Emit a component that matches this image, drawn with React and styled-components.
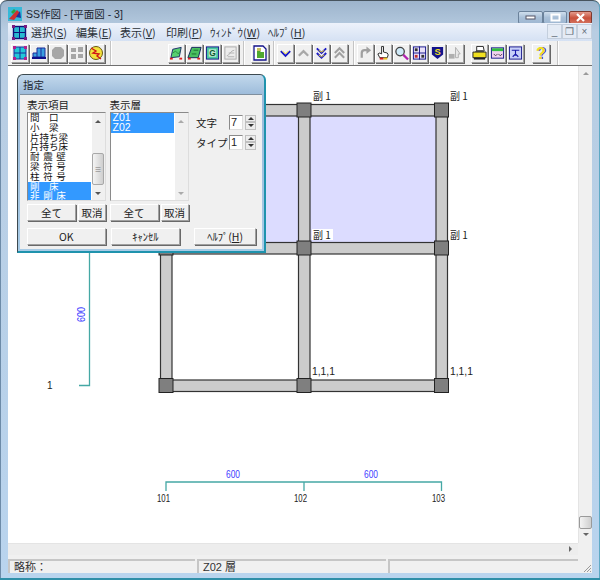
import React from "react";
import styled, { createGlobalStyle } from "styled-components";

const JP = `"Noto Sans CJK JP", "Liberation Sans", sans-serif`;

const GlobalStyle = createGlobalStyle`
  html, body { margin: 0; padding: 0; background: #fff; }
  body { font-family: ${JP}; color: #222; }
`;

/* window frame */
const Win = styled.div`
  width: 600px;
  height: 580px;
  box-sizing: border-box;
  display: flex;
  flex-direction: column;
  padding: 0 8px 7px 8px;
  border-radius: 7px 7px 0 0;
  border: 1px solid #47545e;
  border-width: 1px 0 0 0;
  box-shadow: inset 0 -2px 0 #2f8fa8, inset -1px 0 0 #5ea9c4, inset 1px 0 0 #6d8ba8;
  background: linear-gradient(180deg, #9db4cc 0, #b8cde2 30px, #b9d4ee 100%);
  overflow: hidden;
`;

const TitleBar = styled.div`
  height: 22px;
  display: flex;
  align-items: center;
  gap: 4px;
  font-size: 10.5px;
  color: #1c2630;
  padding-top: 3px;
  box-sizing: border-box;
`;

const TitleText = styled.span`
  font-family: "Liberation Sans", ${JP};
  flex: 1;
`;

const CapGroup = styled.div`
  display: flex;
  gap: 0;
  align-self: flex-start;
  margin-top: 7px;
`;

const CapBtn = styled.div`
  width: ${(p) => p.$w}px;
  height: 13px;
  margin-left: ${(p) => p.$ml || 0}px;
  border: 1px solid ${(p) => (p.$close ? "#7d3a30" : "#6b829b")};
  border-radius: 2px;
  box-sizing: border-box;
  display: flex;
  align-items: center;
  justify-content: center;
  background: ${(p) =>
    p.$close
      ? "linear-gradient(180deg,#e39b8d,#c9503c 55%,#d2705c)"
      : "linear-gradient(180deg,#cfdeed,#a9c0d8 50%,#9fb8d2)"};
`;

const MenuBar = styled.div`
  height: 18px;
  display: flex;
  align-items: center;
  background: linear-gradient(180deg, #edf2fb, #d5e1f3);
  font-size: 11px;
  color: #2a3138;
`;

const MenuIcon = styled.div`
  width: 23px;
  padding-left: 4px;
  box-sizing: border-box;
  display: flex;
`;

const MenuItem = styled.span`
  width: ${(p) => p.$w}px;
  white-space: nowrap;
  u { text-underline-offset: 1px; }
`;

const MdiButtons = styled.div`
  margin-left: auto;
  display: flex;
  height: 100%;
`;

const MdiBtn = styled.div`
  width: 15px;
  height: 15px;
  margin: 1px 0 0 0;
  box-sizing: border-box;
  border: 1px solid #c4cfdd;
  background: #e4ebf5;
  color: #66707c;
  font-size: 10px;
  line-height: 13px;
  text-align: center;
  font-family: "Liberation Sans", sans-serif;
`;

const Toolbar = styled.div`
  height: 25px;
  display: flex;
  align-items: center;
  background: #f0f0f0;
  border-bottom: 1px solid #6f6f6f;
  box-sizing: border-box;
`;

const Group = styled.div`
  display: flex;
  gap: 1px;
  margin-left: ${(p) => p.$ml}px;
`;

const Sep = styled.div`
  width: 1px;
  height: 24px;
  margin-left: ${(p) => p.$ml}px;
  background: #c4c4c4;
  border-right: 1px solid #fff;
`;

const ToolBtn = styled.div`
  width: ${(p) => p.$w}px;
  height: 19px;
  box-sizing: border-box;
  display: flex;
  align-items: center;
  justify-content: center;
  background: #f0f0f0;
  border-top: 1px solid #fff;
  border-left: 1px solid #fff;
  border-right: 1px solid #a0a0a0;
  border-bottom: 1px solid #a0a0a0;
  box-shadow: 1px 1px 0 #666;
  svg { display: block; }
`;

/* client area */
const Client = styled.div`
  position: relative;
  flex: 1;
  display: grid;
  grid-template-columns: 1fr 14px;
  grid-template-rows: 1fr 12px;
  background: #f0f0f0;
  min-height: 0;
`;

const Canvas = styled.div`
  background: #fff;
  overflow: hidden;
  svg { display: block; }
`;

const VScroll = styled.div`
  position: relative;
  background: #f0f0f0;
  border-left: 1px solid #e4e4e4;
`;

const VThumb = styled.div`
  position: absolute;
  left: 0;
  top: 450px;
  width: 13px;
  height: 13px;
  box-sizing: border-box;
  border: 1px solid #9a9a9a;
  border-radius: 2px;
  background: linear-gradient(90deg, #f4f4f4, #cfcfcf);
`;

const ArrowGlyph = styled.div`
  position: absolute;
  width: 0;
  height: 0;
  border-style: solid;
  border-color: transparent;
  ${(p) => p.$css}
`;

const HScroll = styled.div`
  position: relative;
  background: #ededed;
  border-top: 1px solid #e4e4e4;
  grid-column: 1;
`;

const Corner = styled.div`
  background: #f0f0f0;
`;

const StatusBar = styled.div`
  height: 18px;
  display: flex;
  gap: 2px;
  background: #f0f0f0;
  padding-top: 4px;
  box-sizing: border-box;
  font-size: 11px;
  position: relative;
`;

const StatusPanel = styled.div`
  width: ${(p) => p.$w}px;
  box-sizing: border-box;
  border-top: 2px solid #c6c6c6;
  border-left: 2px solid #c6c6c6;
  padding-left: 4px;
  line-height: 12px;
  color: #333;
  white-space: nowrap;
  font-family: "Liberation Sans", ${JP};
`;

const Grip = styled.svg`
  position: absolute;
  right: 0;
  bottom: 0;
`;

/* floating dialog */
const Dialog = styled.div`
  position: absolute;
  left: 9px;
  top: 8px;
  width: 249px;
  height: 179px;
  box-sizing: border-box;
  border: 1px solid #3d4a50;
  border-right: 2px solid #1f93ad;
  border-bottom: 2px solid #1f93ad;
  border-radius: 6px 6px 0 0;
  padding: 0 2px 2px 2px;
  background: linear-gradient(180deg, #c2d8ec, #9cbbda 20px, #a8cbe6);
  display: flex;
  flex-direction: column;
`;

const DialogTitle = styled.div`
  height: 19px;
  line-height: 19px;
  font-size: 10.5px;
  padding-left: 3px;
  color: #1c2630;
`;

const DialogBody = styled.div`
  flex: 1;
  background: #f0f0f0;
  border-top: 1px solid #7f8f9e;
  padding: 2px 6px 0 7px;
  display: flex;
  flex-direction: column;
  font-size: 10.5px;
`;

const TopRow = styled.div`
  display: flex;
`;

const Column = styled.div`
  width: ${(p) => p.$w}px;
  display: flex;
  flex-direction: column;
`;

const Label = styled.div`
  height: 15px;
  line-height: 15px;
  color: #222;
`;

const ListBox = styled.div`
  position: relative;
  width: 79px;
  height: 89px;
  box-sizing: border-box;
  border: 1px solid #8a8a8a;
  border-right-color: #ddd;
  border-bottom-color: #ddd;
  background: #fff;
  overflow: hidden;
`;

const ListItem = styled.div`
  height: 9.8px;
  line-height: 9.8px;
  width: 63px;
  padding-left: 2px;
  box-sizing: border-box;
  font-size: 9.5px;
  white-space: pre;
  word-spacing: 1.5px;
  background: ${(p) => (p.$sel ? "#3399ff" : "transparent")};
  color: ${(p) => (p.$sel ? "#fff" : "#111")};
`;

const LayerItem = styled(ListItem)`
  font-size: 10.5px;
  font-family: "Liberation Sans", sans-serif;
`;

const ListScroll = styled.div`
  position: absolute;
  right: 0;
  top: 0;
  bottom: 0;
  width: 13px;
  background: #f0f0f0;
`;

const ListThumb = styled.div`
  position: absolute;
  left: 0;
  top: 40px;
  width: 12px;
  height: 32px;
  box-sizing: border-box;
  border: 1px solid #a8a8a8;
  border-radius: 2px;
  background: linear-gradient(90deg, #f4f4f4, #cfcfcf);
  display: flex;
  align-items: center;
  justify-content: center;
  color: #777;
  font-size: 7px;
  line-height: 2px;
`;

const BtnRow = styled.div`
  display: flex;
  gap: ${(p) => p.$gap || 2}px;
  margin-top: ${(p) => p.$mt}px;
`;

const PushBtn = styled.div`
  width: ${(p) => p.$w}px;
  margin-left: ${(p) => p.$ml || 0}px;
  height: ${(p) => p.$h}px;
  line-height: ${(p) => p.$h - 2}px;
  box-sizing: border-box;
  text-align: center;
  font-size: 10.5px;
  color: #222;
  background: #f0f0f0;
  border-top: 1px solid #fff;
  border-left: 1px solid #fff;
  border-right: 1px solid #a0a0a0;
  border-bottom: 1px solid #a0a0a0;
  box-shadow: 1px 1px 0 #696969;
  white-space: nowrap;
`;

const SpinRow = styled.div`
  display: flex;
  align-items: center;
  height: 20px;
  font-size: 10.5px;
`;

const SpinLabel = styled.span`
  width: 33px;
`;

const SpinValue = styled.div`
  width: 14px;
  height: 15px;
  line-height: 13px;
  box-sizing: border-box;
  border: 1px solid #8a8a8a;
  border-right-color: #ddd;
  border-bottom-color: #ddd;
  background: #fff;
  font-size: 11px;
  padding-left: 1px;
  font-family: "Liberation Sans", sans-serif;
`;

const SpinBtns = styled.div`
  margin-left: 2px;
  width: 11px;
  height: 15px;
  display: flex;
  flex-direction: column;
`;

const SpinBtn = styled.div`
  flex: 1;
  position: relative;
  background: #ececec;
  border: 1px solid #c0c0c0;
  box-sizing: border-box;
`;

const up = (l, t, c = "#555") => `left:${l}px;top:${t}px;border-width:0 3px 3px 3px;border-bottom-color:${c};`;
const down = (l, t, c = "#555") => `left:${l}px;top:${t}px;border-width:3px 3px 0 3px;border-top-color:${c};`;

const S16 = ({ children }) => (
  <svg width="16" height="16" viewBox="0 0 16 16">
    {children}
  </svg>
);

const Dots = () => (
  <g fill="#e02020">
    <rect x="1" y="13" width="3" height="2" />
    <rect x="11" y="13" width="3" height="2" />
  </g>
);

const icons = {
  grid: (
    <S16>
      <rect x="2" y="2" width="12" height="12" fill="#22c8d8" stroke="#1a2a9a" />
      <path d="M8 2v12M2 8h12" stroke="#1a2a9a" />
      <g fill="#b02090">
        <rect x="1" y="1" width="3" height="3" />
        <rect x="12" y="1" width="3" height="3" />
        <rect x="1" y="12" width="3" height="3" />
        <rect x="12" y="12" width="3" height="3" />
      </g>
    </S16>
  ),
  stairs: (
    <S16>
      <path d="M2 12V8h4V3h8v9z" fill="#3aa0e0" stroke="#1a2a9a" />
      <path d="M6 8v4M10 3v9" stroke="#1a2a9a" />
      <rect x="1" y="12" width="14" height="2" fill="#10108a" />
    </S16>
  ),
  octagon: (
    <S16>
      <path d="M5 2h6l3 3v6l-3 3H5l-3-3V5z" fill="#a6a6a6" />
    </S16>
  ),
  squares: (
    <S16>
      <g fill="#a6a6a6">
        <rect x="2" y="3" width="5" height="4" />
        <rect x="9" y="2" width="5" height="5" />
        <rect x="2" y="9" width="5" height="5" />
        <rect x="9" y="9" width="5" height="4" />
      </g>
    </S16>
  ),
  yellow: (
    <S16>
      <circle cx="8" cy="8" r="6.5" fill="#f4e23c" stroke="#6a5a10" />
      <path d="M3 3l5 3-3 2 6 1-2 2 4 3" fill="none" stroke="#d01818" strokeWidth="1.4" />
    </S16>
  ),
  slabA: (
    <S16>
      <path d="M4 4l9-2-2 10-9 1z" fill="#58d070" stroke="#1a2a6a" />
      <path d="M4 8l3-2 3 3 2-3" fill="none" stroke="#2a8a40" />
      <Dots />
    </S16>
  ),
  slabB: (
    <S16>
      <path d="M5 2h10l-3 11H1z" fill="#48c060" stroke="#10205a" />
      <path d="M7 5h5M5 9h5" stroke="#1a6a30" />
      <Dots />
    </S16>
  ),
  boxG: (
    <S16>
      <rect x="1.5" y="1.5" width="13" height="13" fill="#48c8a0" stroke="#14148a" />
      <rect x="4" y="4" width="8" height="8" fill="#bfe8d0" />
      <text x="8" y="11.5" fontSize="9" fontFamily="Liberation Sans" fontWeight="700" textAnchor="middle" fill="#0a5a30">G</text>
    </S16>
  ),
  ghost: (
    <S16>
      <rect x="2" y="1.5" width="12" height="13" fill="#ececec" stroke="#a8a8a8" />
      <path d="M4 11c3 0 4-6 8-6M5 12h7M6 8h6" fill="none" stroke="#b0b0b0" />
    </S16>
  ),
  doc: (
    <S16>
      <path d="M2 1h9l3 3v11H2z" fill="#fff" stroke="#14148a" strokeWidth="1.3" />
      <path d="M5 6h3l1 1h3v6H5z" fill="#50a830" />
      <path d="M5 3h4v3H5z" fill="#c8c060" />
    </S16>
  ),
  chevDown: (
    <S16>
      <path d="M3 6l5 5 5-5" fill="none" stroke="#1818c8" strokeWidth="2" />
      <path d="M5 6l3 3 3-3" fill="none" stroke="#f0d820" strokeWidth="1" />
    </S16>
  ),
  chevUp: (
    <S16>
      <path d="M3 11l5-5 5 5" fill="none" stroke="#a8a8a8" strokeWidth="2.4" />
    </S16>
  ),
  dblDown: (
    <S16>
      <path d="M3 3l5 5 5-5M3 8l5 5 5-5" fill="none" stroke="#1818c8" strokeWidth="2" />
      <path d="M5 5l3 2 3-2M5 10l3 2 3-2" fill="none" stroke="#f0d820" />
    </S16>
  ),
  dblUp: (
    <S16>
      <path d="M3 8l5-5 5 5M3 13l5-5 5 5" fill="none" stroke="#a0a0a0" strokeWidth="2.2" />
    </S16>
  ),
  redo: (
    <S16>
      <path d="M4 13V8c0-2 1-3 3-3h4" fill="none" stroke="#a0a0a0" strokeWidth="2.4" />
      <path d="M9 1l5 4-5 4z" fill="#a0a0a0" />
    </S16>
  ),
  hand: (
    <S16>
      <path d="M6 1h2v6l4 1 1 2-1 3H4L2 9l2-1 2 1z" fill="#fff" stroke="#222" />
      <rect x="4" y="13" width="4" height="2" fill="#e02020" />
      <rect x="8" y="13" width="4" height="2" fill="#e8c020" />
    </S16>
  ),
  search: (
    <S16>
      <circle cx="6.5" cy="6.5" r="4.5" fill="#cfeaf8" stroke="#444" strokeWidth="1.4" />
      <path d="M10 10l5 5" stroke="#b020b0" strokeWidth="2.4" />
    </S16>
  ),
  gridDoc: (
    <S16>
      <rect x="1.5" y="1.5" width="13" height="13" fill="#e8e0f8" stroke="#14148a" />
      <path d="M8 1v14M1 8h14" stroke="#14148a" />
      <rect x="3" y="3" width="3" height="3" fill="#333" />
      <rect x="10" y="10" width="3" height="3" fill="#333" />
      <rect x="3" y="10" width="3" height="3" fill="#c03030" />
    </S16>
  ),
  shield: (
    <S16>
      <path d="M2 1.5h12v8l-6 5-6-5z" fill="#14148a" />
      <text x="8" y="10.5" fontSize="10" fontFamily="Liberation Sans" fontWeight="700" textAnchor="middle" fill="#f0e020">S</text>
    </S16>
  ),
  ghostArrow: (
    <S16>
      <rect x="1" y="9" width="6" height="5" fill="#b0b0b0" />
      <path d="M8 2l5 7h-2v4H8z" fill="#e8e8e8" stroke="#b0b0b0" />
    </S16>
  ),
  printer: (
    <S16>
      <path d="M5 1h7l1 5H5z" fill="#fff" stroke="#222" />
      <path d="M1 7h14v6H1z" fill="#f0e020" stroke="#222" />
      <path d="M3 7l2-2h7l1 2z" fill="#444" />
      <rect x="2" y="13" width="12" height="2" fill="#222" />
    </S16>
  ),
  window: (
    <S16>
      <rect x="1.5" y="2.5" width="13" height="11" fill="#f0d0f0" stroke="#14148a" />
      <rect x="2" y="3" width="12" height="3" fill="#30c040" />
      <path d="M4 9l2 2M8 9l-2 2M9 9l2 2M13 9l-2 2" stroke="#444" />
    </S16>
  ),
  info: (
    <S16>
      <rect x="1.5" y="1.5" width="13" height="13" fill="#c8d0f8" stroke="#14148a" />
      <path d="M4 5h8M8 5v6M5 12l3-3 3 3" fill="none" stroke="#1818a8" strokeWidth="1.2" />
    </S16>
  ),
  help: (
    <S16>
      <text x="9" y="14" fontSize="16" fontFamily="Liberation Sans" fontWeight="700" textAnchor="middle" fill="#1818a8">?</text>
      <text x="8" y="13.5" fontSize="16" fontFamily="Liberation Sans" fontWeight="700" textAnchor="middle" fill="#f0e020">?</text>
    </S16>
  ),
};

const groups = [
  { ml: 3, w: 18, items: ["grid", "stairs", "octagon", "squares", "yellow"] },
  { sep: 5 },
  { ml: 56, w: 17, items: ["slabA", "slabB", "boxG", "ghost"] },
  { sep: 4 },
  { ml: 6, w: 18, items: ["doc"] },
  { sep: 4 },
  { ml: 2, w: 17, items: ["chevDown", "chevUp", "dblDown", "dblUp"] },
  { sep: 5 },
  { ml: 2, w: 17, items: ["redo", "hand", "search", "gridDoc", "shield", "ghostArrow"] },
  { ml: 7, w: 17, items: ["printer", "window", "info"] },
  { ml: 8, w: 18, items: ["help"] },
  { sep: 7 },
];

const menus = [
  { w: 45, t: "選択", k: "S" },
  { w: 44, t: "編集", k: "E" },
  { w: 46, t: "表示", k: "V" },
  { w: 44, t: "印刷", k: "P" },
  { w: 58, t: "ｳｨﾝﾄﾞｳ", k: "W" },
  { w: 50, t: "ﾍﾙﾌﾟ", k: "H" },
];

const listItems = ["間　口", "小　梁", "片持ち梁", "片持ち床", "耐 震 壁", "梁 符 号", "柱 符 号", "剛　床", "非 剛 床"];

const columns = [166, 304, 441.5];
const rows = [110, 248, 385.5];

const Beam = ({ x, y, w, h }) => (
  <rect x={x} y={y} width={w} height={h} fill="#cccccc" stroke="#333" strokeWidth="1.2" />
);

// narrow bitmap style numbers, squeezed to the width they have on screen
const Num = ({ x, y, len, children, ...rest }) => (
  <text x={x} y={y} textLength={len} lengthAdjust="spacingAndGlyphs" {...rest}>
    {children}
  </text>
);

// 平面図
function Plan() {
  const teal = "#45a8a5";
  const blue = "#4040ff";
  const small = { fontFamily: "Liberation Sans, sans-serif", fontSize: 10 };
  return (
    <svg width="570" height="477" viewBox="8 66 570 477">
      <rect x="166" y="110" width="276" height="138" fill="#dcdcff" />
      {rows.map((y) => (
        <Beam key={y} x={166} y={y - 5.5} w={276} h={11.5} />
      ))}
      {columns.map((x) => (
        <Beam key={x} x={x - 5.5} y={110} w={11.5} h={276} />
      ))}
      {columns.flatMap((x) =>
        rows.map((y) => (
          <rect key={x + "-" + y} x={x - 7} y={y - 7} width={14} height={14} fill="#7f7f7f" stroke="#222" />
        ))
      )}
      <rect x="312" y="229" width="21" height="11" fill="#fff" />
      <g fontFamily={JP} fontSize="10" fill="#222">
        <text x="313" y="100">副 1</text>
        <text x="450" y="100">副 1</text>
        <text x="313" y="238.5">副 1</text>
        <text x="450" y="238.5">副 1</text>
      </g>
      <g {...small} fill="#222">
        <Num x={312} y={375} len={23}>1,1,1</Num>
        <Num x={450} y={375} len={23}>1,1,1</Num>
        <text x="47" y="389">1</text>
        <Num x={157} y={502} len={13}>101</Num>
        <Num x={294} y={502} len={13}>102</Num>
        <Num x={432} y={502} len={13}>103</Num>
      </g>
      <path d="M79 385.5H89.5V250" fill="none" stroke={teal} strokeWidth="1.3" />
      <path d="M166 491V482H441.5V491M304 482V491" fill="none" stroke={teal} strokeWidth="1.3" />
      <g {...small} fill={blue}>
        <Num x={226} y={478} len={14}>600</Num>
        <Num x={364} y={478} len={14}>600</Num>
        <Num x={0} y={0} len={15} transform="translate(85 322) rotate(-90)">600</Num>
      </g>
    </svg>
  );
}

function App() {
  return (
    <>
      <GlobalStyle />
      <Win>
        <TitleBar>
          <svg width="14" height="14" viewBox="0 0 14 14">
            <rect width="14" height="14" fill="#36b8d8" />
            <path d="M1 12L9 3l3 3-6 7z" fill="#d03030" />
            <path d="M3 5l3-3 2 2-3 3z" fill="#30a040" />
            <path d="M8 10l4-6 1 7z" fill="#2030a0" />
          </svg>
          <TitleText>SS作図 - [平面図 - 3]</TitleText>
          <CapGroup>
            <CapBtn $w={25}>
              <svg width="11" height="5"><rect x="1" y="1" width="9" height="3" fill="#fff" stroke="#556" /></svg>
            </CapBtn>
            <CapBtn $w={24}>
              <svg width="11" height="9"><rect x="1.5" y="1.5" width="8" height="6" fill="none" stroke="#fff" strokeWidth="2" /></svg>
            </CapBtn>
            <CapBtn $w={23} $ml={2} $close>
              <svg width="11" height="9"><path d="M2 1l7 7M9 1L2 8" stroke="#fff" strokeWidth="2.2" /></svg>
            </CapBtn>
          </CapGroup>
        </TitleBar>

        <MenuBar>
          <MenuIcon>
            <svg width="15" height="15" viewBox="0 0 15 15">
              <rect x="1.5" y="1.5" width="12" height="12" fill="#28b8d0" stroke="#10107a" strokeWidth="1.4" />
              <path d="M7.5 1v13M1 7.5h13" stroke="#10107a" />
              <g fill="#7a1a80">
                <rect width="3" height="3" />
                <rect x="12" width="3" height="3" />
                <rect y="12" width="3" height="3" />
                <rect x="12" y="12" width="3" height="3" />
              </g>
            </svg>
          </MenuIcon>
          {menus.map((m) => (
            <MenuItem key={m.k} $w={m.w}>
              {m.t}(<u>{m.k}</u>)
            </MenuItem>
          ))}
          <MdiButtons>
            <MdiBtn>_</MdiBtn>
            <MdiBtn>❐</MdiBtn>
            <MdiBtn>×</MdiBtn>
          </MdiButtons>
        </MenuBar>

        <Toolbar>
          {groups.map((g, i) =>
            g.sep ? (
              <Sep key={i} $ml={g.sep} />
            ) : (
              <Group key={i} $ml={g.ml}>
                {g.items.map((name) => (
                  <ToolBtn key={name} $w={g.w}>
                    {icons[name]}
                  </ToolBtn>
                ))}
              </Group>
            )
          )}
        </Toolbar>

        <Client>
          <Canvas>
            <Plan />
          </Canvas>
          <VScroll>
            <ArrowGlyph $css={up(4, 6, "#9a9a9a")} />
            <VThumb />
            <ArrowGlyph $css={down(4, 467, "#666")} />
          </VScroll>
          <HScroll>
            <ArrowGlyph $css="left:561px;top:2px;border-width:3px 0 3px 3px;border-left-color:#666;" />
          </HScroll>
          <Corner />

          <Dialog>
            <DialogTitle>指定</DialogTitle>
            <DialogBody>
              <TopRow>
                <Column $w={84}>
                  <Label>表示項目</Label>
                  <ListBox>
                    {listItems.map((t, i) => (
                      <ListItem key={t} $sel={i >= 7}>{t}</ListItem>
                    ))}
                    <ListScroll>
                      <ArrowGlyph $css={up(3, 7)} />
                      <ListThumb>≡</ListThumb>
                      <ArrowGlyph $css={down(3, 79)} />
                    </ListScroll>
                  </ListBox>
                  <BtnRow $mt={3}>
                    <PushBtn $w={49} $h={17}>全て</PushBtn>
                    <PushBtn $w={28} $h={17}>取消</PushBtn>
                  </BtnRow>
                </Column>
                <Column $w={88}>
                  <Label>表示層</Label>
                  <ListBox>
                    <LayerItem $sel>Z01</LayerItem>
                    <LayerItem $sel>Z02</LayerItem>
                    <ListScroll>
                      <ArrowGlyph $css={up(3, 7, "#aaa")} />
                      <ArrowGlyph $css={down(3, 79, "#aaa")} />
                    </ListScroll>
                  </ListBox>
                  <BtnRow $mt={3}>
                    <PushBtn $w={49} $h={17}>全て</PushBtn>
                    <PushBtn $w={28} $h={17}>取消</PushBtn>
                  </BtnRow>
                </Column>
                <Column $w={60}>
                  <Label />
                  <SpinRow>
                    <SpinLabel>文字</SpinLabel>
                    <SpinValue>7</SpinValue>
                    <SpinBtns>
                      <SpinBtn><ArrowGlyph $css={up(2, 1, "#333")} /></SpinBtn>
                      <SpinBtn><ArrowGlyph $css={down(2, 1, "#333")} /></SpinBtn>
                    </SpinBtns>
                  </SpinRow>
                  <SpinRow>
                    <SpinLabel>タイプ</SpinLabel>
                    <SpinValue>1</SpinValue>
                    <SpinBtns>
                      <SpinBtn><ArrowGlyph $css={up(2, 1, "#333")} /></SpinBtn>
                      <SpinBtn><ArrowGlyph $css={down(2, 1, "#333")} /></SpinBtn>
                    </SpinBtns>
                  </SpinRow>
                </Column>
              </TopRow>
              <BtnRow $mt={7}>
                <PushBtn $w={79} $h={17}>OK</PushBtn>
                <PushBtn $w={70} $h={17} $ml={3}>ｷｬﾝｾﾙ</PushBtn>
                <PushBtn $w={62} $h={17} $ml={12}>ﾍﾙﾌﾟ(<u>H</u>)</PushBtn>
              </BtnRow>
            </DialogBody>
          </Dialog>
        </Client>

        <StatusBar>
          <StatusPanel $w={187}>略称：</StatusPanel>
          <StatusPanel $w={189}>Z02 層</StatusPanel>
          <StatusPanel $w={190} />
          <Grip width="10" height="10" viewBox="0 0 10 10">
            <path d="M9 2L2 9M9 5L5 9M9 8L8 9" stroke="#9a9a9a" fill="none" />
          </Grip>
        </StatusBar>
      </Win>
    </>
  );
}

export default App;
